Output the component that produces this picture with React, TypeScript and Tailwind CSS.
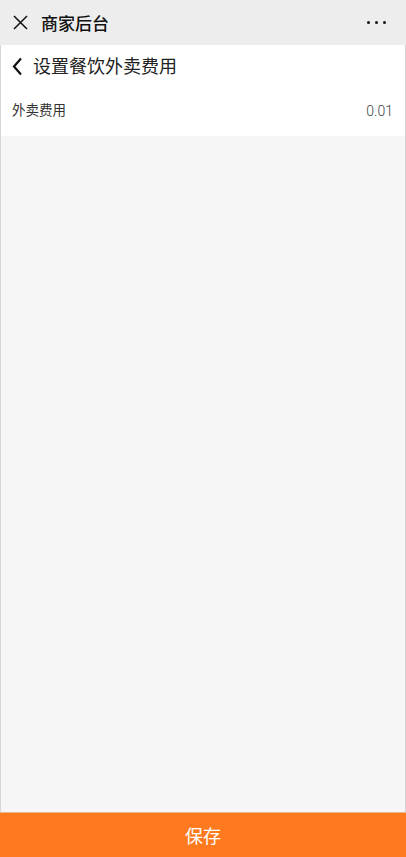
import React from "react";

export default function App() {
  const font = { fontFamily: '"Noto Sans CJK SC", "Noto Sans", sans-serif' };
  return (
    <div className="flex h-[857px] w-[406px] flex-col overflow-hidden bg-[#f6f6f6]" style={font}>
      <div className="flex h-[45px] shrink-0 items-center bg-[#ededed] pl-[13px] pr-[20px]">
        <svg width="15" height="15" viewBox="0 0 15 15" className="shrink-0">
          <path d="M1 1 L14 14 M14 1 L1 14" stroke="#111" strokeWidth="1.5" fill="none" />
        </svg>
        <span className="ml-[13px] text-[17px] font-medium leading-none text-[#111]">商家后台</span>
        <div className="ml-auto flex items-center gap-[5px]">
          <span className="h-[3px] w-[3px] rounded-full bg-[#111]" />
          <span className="h-[3px] w-[3px] rounded-full bg-[#111]" />
          <span className="h-[3px] w-[3px] rounded-full bg-[#111]" />
        </div>
      </div>
      <div className="flex flex-1 flex-col border-x border-[#d6d6d6]">
        <div className="bg-white">
          <div className="flex h-[45px] items-center pb-[3px] pl-[11px]">
            <svg width="11" height="19" viewBox="0 0 11 19" className="shrink-0">
              <path d="M9 1.5 L2 9.5 L9 17.5" stroke="#111" strokeWidth="2.2" fill="none" strokeLinejoin="miter" />
            </svg>
            <span className="ml-[10px] mb-[2px] text-[18px] leading-none text-[#222]">设置餐饮外卖费用</span>
          </div>
          <div className="flex h-[46px] items-start justify-between pl-[11px] pr-[12px] pt-[9px]">
            <span className="text-[13.5px] leading-[20px] text-[#333]">外卖费用</span>
            <span className="mt-[2px] text-[14px] font-light leading-[20px] text-[#444]" style={{ fontFamily: '"Roboto", "Noto Sans", sans-serif' }}>0.01</span>
          </div>
        </div>
        <div className="flex-1" />
      </div>
      <div className="flex h-[45px] shrink-0 items-center justify-center border-t border-[#e8b68a] bg-[#ff7a1f]">
        <span className="text-[18px] leading-none text-white">保存</span>
      </div>
    </div>
  );
}
